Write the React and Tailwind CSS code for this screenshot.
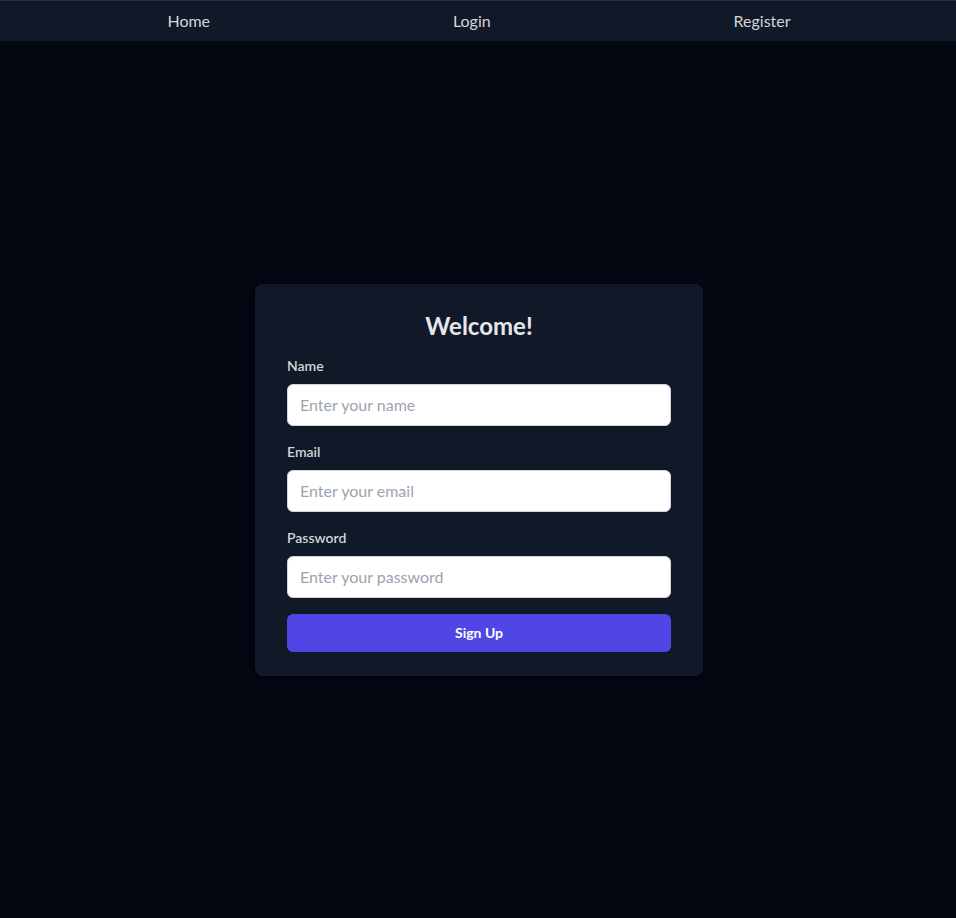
import React, { useState } from 'react';

export default function App() {
    const [form, setForm] = useState({ name: "", email: "", password: "" });

    const handleChange = (e) => {
        setForm({ ...form, [e.target.name]: e.target.value });
    };

    return (
        <div className="min-h-screen flex flex-col bg-[#030712] font-['Lato','Noto_Sans',sans-serif]">
            <nav className="h-[41px] flex items-center justify-around bg-[#111827] border-t border-[#2b313c] pl-[46px] pr-[44px] text-[#d1d5db] text-base">
                <a className="cursor-pointer">Home</a>
                <a className="cursor-pointer">Login</a>
                <a className="cursor-pointer">Register</a>
            </nav>

            <main className="flex-1 flex items-center justify-center">
                <form className="w-[448px] ml-[2px] bg-[#111827] rounded-lg px-8 py-6 shadow-md">
                    <h2 className="text-2xl leading-9 font-bold text-[#e5e7eb] text-center mb-3">Welcome!</h2>

                    <label className="block text-sm font-semibold text-[#d1d5db] mb-2">Name</label>
                    <input
                        type="text"
                        name="name"
                        placeholder="Enter your name"
                        value={form.name}
                        onChange={handleChange}
                        className="w-full px-3 py-2 text-base border border-[#d1d5db] bg-white rounded-md text-gray-900 placeholder:text-[#9ca3af] outline-none mb-4"
                    />

                    <label className="block text-sm font-semibold text-[#d1d5db] mb-2">Email</label>
                    <input
                        type="email"
                        name="email"
                        placeholder="Enter your email"
                        value={form.email}
                        onChange={handleChange}
                        className="w-full px-3 py-2 text-base border border-[#d1d5db] bg-white rounded-md text-gray-900 placeholder:text-[#9ca3af] outline-none mb-4"
                    />

                    <label className="block text-sm font-semibold text-[#d1d5db] mb-2">Password</label>
                    <input
                        type="password"
                        name="password"
                        placeholder="Enter your password"
                        value={form.password}
                        onChange={handleChange}
                        className="w-full px-3 py-2 text-base border border-[#d1d5db] bg-white rounded-md text-gray-900 placeholder:text-[#9ca3af] outline-none"
                    />

                    <button
                        type="button"
                        className="w-full h-[38px] mt-4 bg-[#4f46e5] text-white text-sm font-bold rounded-md"
                    >
                        Sign Up
                    </button>
                </form>
            </main>
        </div>
    );
}
